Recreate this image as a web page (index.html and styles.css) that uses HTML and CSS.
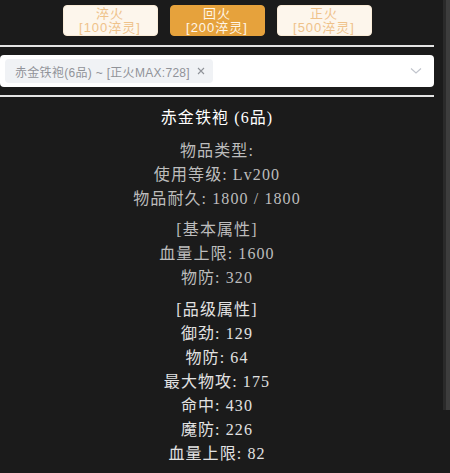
FILE: index.html
```html
<!DOCTYPE html>
<html lang="zh">
<head>
<meta charset="utf-8">
<link rel="stylesheet" href="styles.css">
</head>
<body>
<div class="page">
  <div class="main">
    <div class="btn-row">
      <div class="btn btn-plain"><span>淬火</span><span>[100淬灵]</span></div>
      <div class="btn btn-active"><span>回火</span><span>[200淬灵]</span></div>
      <div class="btn btn-plain"><span>正火</span><span>[500淬灵]</span></div>
    </div>
    <div class="rule"></div>
    <div class="select">
      <div class="tag">
        <span class="tag-text">赤金铁袍(6品) ~ [正火MAX:728]</span>
        <svg class="tag-close" width="10" height="10" viewBox="0 0 10 10"><path d="M2 2 L8 8 M8 2 L2 8" stroke="#909399" stroke-width="1.1" fill="none"/></svg>
      </div>
      <svg class="chevron" width="12" height="8" viewBox="0 0 12 8"><path d="M1 1.5 L6 6 L11 1.5" stroke="#c0c4cc" stroke-width="1.1" fill="none"/></svg>
    </div>
    <div class="rule"></div>
    <div class="info">
      <div class="title">赤金铁袍 (6品)</div>
      <div class="block base">
        <div>物品类型:</div>
        <div>使用等级: Lv200</div>
        <div>物品耐久: 1800 / 1800</div>
      </div>
      <div class="block base sec">
        <div>[基本属性]</div>
        <div>血量上限: 1600</div>
        <div>物防: 320</div>
      </div>
      <div class="block grade sec2">
        <div>[品级属性]</div>
        <div>御劲: 129</div>
        <div>物防: 64</div>
        <div>最大物攻: 175</div>
        <div>命中: 430</div>
        <div>魔防: 226</div>
        <div>血量上限: 82</div>
      </div>
    </div>
  </div>
  <div class="scrollbar"><div class="thumb"></div></div>
</div>
</body>
</html>
```

FILE: styles.css
```css
html, body {
  margin: 0;
  padding: 0;
  background: #1b1b1b;
}
body {
  font-family: "Liberation Serif", "Noto Sans CJK SC", serif;
}
.page {
  display: flex;
  height: 473px;
  overflow: hidden;
}
.main {
  width: 434px;
  flex: none;
}
.scrollbar {
  margin-left: 9px;
  width: 7px;
  flex: none;
  display: flex;
  background: #1b1b1b;
}
.thumb {
  width: 7px;
  height: 410px;
  background: linear-gradient(to right, #2a2a2a 0 3px, #3d3d3d 3px 7px);
}
.btn-row {
  display: flex;
  justify-content: center;
  gap: 12px;
  padding-top: 5px;
  height: 32px;
}
.btn {
  width: 95px;
  height: 31px;
  box-sizing: border-box;
  border-radius: 4px;
  display: flex;
  flex-direction: column;
  align-items: center;
  justify-content: center;
  font-family: "Liberation Sans", "Noto Sans CJK SC", sans-serif;
  font-size: 13px;
  line-height: 14px;
  letter-spacing: 1px;
}
.btn-plain {
  background: #fdf6ec;
  border: 1px solid #faecd8;
  color: #efc28a;
}
.btn-active {
  background: #e6a23c;
  border: 1px solid #e6a23c;
  color: #fff6e8;
}
.rule {
  height: 2px;
  background: #e4e4e4;
  margin-top: 8px;
}
.select {
  margin-top: 8px;
  height: 32px;
  background: #fff;
  border-radius: 4px;
  display: flex;
  align-items: center;
  padding-left: 5px;
  padding-right: 12px;
  box-sizing: border-box;
  justify-content: space-between;
}
.tag {
  height: 24px;
  box-sizing: border-box;
  background: #f0f2f5;
  border-radius: 4px;
  display: flex;
  align-items: center;
  padding: 0 7px 0 10px;
  color: #909399;
  font-family: "Liberation Sans", "Noto Sans CJK SC", sans-serif;
  font-size: 12px;
  white-space: nowrap;
  letter-spacing: 0.3px;
}
.tag-close {
  margin-left: 6px;
}
.chevron {
  flex: none;
}
.info {
  text-align: center;
  font-size: 16px;
  line-height: 24px;
  color: #bdbdbd;
  padding-top: 9px;
  letter-spacing: 1.1px;
}
.title {
  color: #ffffff;
  margin-bottom: 9px;
}
.sec {
  margin-top: 7px;
}
.sec2 {
  margin-top: 8px;
}
.grade {
  color: #e2e2e2;
}
```
